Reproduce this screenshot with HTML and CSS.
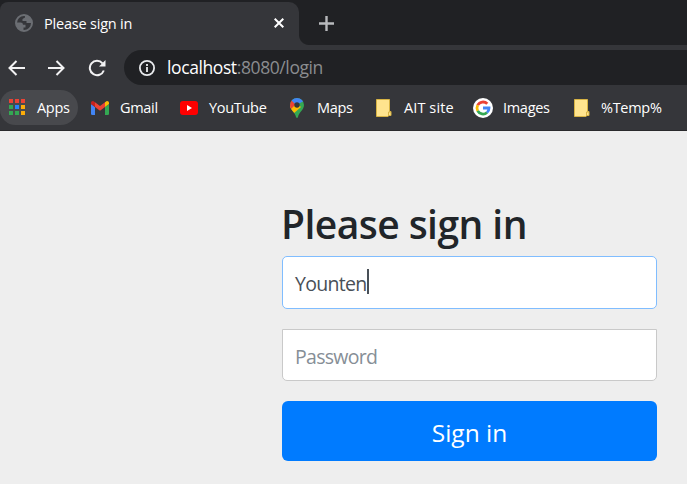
FILE: index.html
```html
<!DOCTYPE html>
<html lang="en">
<head>
<meta charset="utf-8">
<title>Please sign in</title>
<link rel="stylesheet" href="styles.css">
</head>
<body>
<header class="browser">
  <div class="tabs">
    <div class="tab">
      <svg class="globe" width="18" height="18" viewBox="0 0 18 18"><circle cx="9" cy="9" r="8" fill="none" stroke="#6b6e73" stroke-width="2"/><path d="M1 8.500h4.500q2.500 0 2.500 2.300h2.500v2.700H8.500V17L3 15 1 11zM10 1v2.500L7.500 5v2h4v2H17V7l-3-5z" fill="#6b6e73"/></svg>
      <span class="tab-title">Please sign in</span>
      <svg class="close" width="10" height="10" viewBox="0 0 10 10"><path d="M.7.7l8.600 8.600M9.300.7L.7 9.300" stroke="#fff" stroke-width="2"/></svg>
    </div>
    <div class="tab-curve"></div>
    <svg class="plus" width="15" height="15" viewBox="0 0 15 15"><path d="M7.500 0v15M0 7.500h15" stroke="#b8babd" stroke-width="2.400"/></svg>
  </div>
  <div class="toolbar">
    <svg class="nav" width="17" height="16" viewBox="0 0 17 16"><path d="M17 8H1.500M8.500 1L1.500 8l7 7"/></svg>
    <svg class="nav" width="17" height="16" viewBox="0 0 17 16"><path d="M0 8h15.500M8.500 1l7 7-7 7"/></svg>
    <svg class="nav reload" width="18" height="18" viewBox="0 0 18 18"><path d="M14.500 4.300A7.200 7.200 0 1 0 15.800 11.500"/><path class="solid" d="M17.500 1v6.500H11z"/></svg>
    <div class="address">
      <svg class="info" width="16" height="16" viewBox="0 0 16 16"><circle cx="8" cy="8" r="7.100"/><path d="M8 7v5M8 4v2"/></svg>
      <span class="url"><b>localhost</b>:8080/login</span>
    </div>
  </div>
  <nav class="bookmarks">
    <a class="mark apps"><svg width="17" height="17" viewBox="0 0 17 17"><path d="M0 0h4v4H0zM6 0h4v4H6zM12 0h4v4h-4z" fill="#ea4335"/><path d="M0 6h4v4H0zM0 12h4v4H0zM6 12h4v4H6z" fill="#34a853"/><path d="M6 6h4v4H6z" fill="#2784fc"/><path d="M12 6h4v4h-4zM12 12h4v4h-4z" fill="#fbac09"/></svg><span>Apps</span></a>
    <a class="mark"><svg width="18" height="14" viewBox="0 0 18 14"><path d="M0 3l4 3v8H1.300Q0 14 0 12.700z" fill="#4285f4"/><path d="M18 3l-4 3v8h2.700q1.300 0 1.300-1.300z" fill="#34a853"/><path d="M4 1.300l5 3.800 5-3.800V6L9 9.800 4 6z" fill="#ea4335"/><path d="M0 3V2C0 .2 2-.5 3.300.700L4 1.300V6z" fill="#c5221f"/><path d="M18 3V2c0-1.800-2-2.500-3.300-1.300L14 1.300V6z" fill="#fbbc04"/></svg><span>Gmail</span></a>
    <a class="mark"><svg width="18" height="14" viewBox="0 0 18 14"><rect width="18" height="14" rx="3" fill="#f00"/><path d="M7 4l5 3-5 3z" fill="#fff"/></svg><span>YouTube</span></a>
    <a class="mark maps"><svg width="14" height="20" viewBox="0 0 14 20"><defs><clipPath id="pin"><path d="M7 0a7 7 0 0 1 7 7c0 5-5 7-6 12q-1 2-2 0C5 14 0 12 0 7a7 7 0 0 1 7-7z"/></clipPath></defs><g clip-path="url(#pin)"><path d="M0 0h14v20H0z" fill="#34a853"/><path d="M0 8L5 4l6 5-8 7H0z" fill="#fbbc04"/><path d="M0 1L6 6 0 12z" fill="#ea4335"/><path d="M1 2L6 7 14 3 10-1H3z" fill="#4285f4"/></g><circle cx="7" cy="7" r="2.700" fill="#35363a"/></svg><span>Maps</span></a>
    <a class="mark ait"><svg width="16" height="18" viewBox="0 0 16 18"><path d="M.5.500h13v12h1.500v4H13l-1 1H.5z" fill="#ffe48e" stroke="#d7b344"/><path d="M12.500 17v-4h2.500" fill="none" stroke="#d7b344"/></svg><span>AIT site</span></a>
    <a class="mark google"><svg width="20" height="20" viewBox="0 0 20 20"><circle cx="10" cy="10" r="10" fill="#fff"/><g fill="none" stroke-width="2.800"><path d="M4.700 7.200A6 6 0 0 1 14.300 5.800" stroke="#ea4335"/><path d="M4.700 12.800a6 6 0 0 1 0-5.600" stroke="#fbbc04"/><path d="M14 14.500a6 6 0 0 1-9.300-1.700" stroke="#34a853"/><path d="M10 10h6q0 3-2 4.500" stroke="#4285f4"/></g></svg><span>Images</span></a>
    <a class="mark"><svg width="16" height="18" viewBox="0 0 16 18"><path d="M.5.500h13v12h1.500v4H13l-1 1H.5z" fill="#ffe48e" stroke="#d7b344"/><path d="M12.500 17v-4h2.500" fill="none" stroke="#d7b344"/></svg><span>%Temp%</span></a>
  </nav>
</header>
<main class="page">
  <form class="login">
    <h1><span>Please sign in</span></h1>
    <div class="field user"><span>Younten</span><i class="caret"></i></div>
    <div class="field password"><span>Password</span></div>
    <button type="button"><span>Sign in</span></button>
  </form>
</main>
</body>
</html>
```
FILE: styles.css
```css
* { box-sizing: border-box; }
body { margin: 0; height: 484px; overflow: hidden; background: #eee; font-family: "Open Sans", "Noto Sans", sans-serif; }
svg { display: block; flex: none; }
span { white-space: nowrap; }
.browser { height: 131px; background: #35363a; border-bottom: 1px solid #29292c; color: #fff; }
.tabs { height: 45px; background: #202124; display: flex; align-items: flex-end; }
.tab { width: 299px; height: 43px; background: #35363a; border-radius: 8px 10px 0 0; display: flex; align-items: center; padding: 0 15px 1px; }
.tab-title { margin-left: 11px; font-size: 14.500px; letter-spacing: -.2px; }
.close { margin-left: auto; }
.tab-curve { width: 10px; height: 10px; background: radial-gradient(circle at 100% 0, #202124 9.5px, #35363a 10.500px); }
.plus { margin: 0 0 14px 10px; }
.toolbar { height: 45px; display: flex; align-items: center; padding-left: 8px; gap: 23px; }
.nav { fill: none; stroke: #f2f2f3; stroke-width: 2; }
.nav .solid { fill: #f2f2f3; stroke: none; }
.reload { margin-right: -5px; }
.address { flex: 1; height: 35px; background: #202124; border-radius: 18px 0 0 18px; display: flex; align-items: center; padding-left: 15px; }
.info { fill: none; stroke: #e8eaed; stroke-width: 1.800; }
.url { margin: -2px 0 0 12px; font-size: 17.500px; letter-spacing: -.4px; color: #8b8d90; }
.url b { font-weight: 400; color: #fff; }
.bookmarks { height: 35px; display: grid; grid-template-columns: 91px 89px 110px 86px 97px 101px 1fr; }
.mark { display: flex; align-items: center; font-size: 14.500px; letter-spacing: -.3px; }
.mark span { margin-left: 11px; }
.apps { width: 78px; background: #48494d; border-radius: 16px 18px 18px 16px; padding-left: 9px; }
.maps span { margin-left: 13px; }
.google span { margin-left: 10px; }
.ait span { margin-left: 12px; letter-spacing: .1px; }
.login { width: 375px; margin-left: 282px; padding-top: 65px; }
h1 { margin: 0 0 0 -1px; height: 60px; line-height: 56px; font-size: 39px; font-weight: 600; letter-spacing: -.55px; color: #212529; }
.field { display: flex; align-items: center; padding: 2px 12px 0; background: #fff; font-size: 19.500px; letter-spacing: -.7px; }
.user { height: 53px; border: 1px solid #80bdff; border-radius: 5px; color: #495057; }
.caret { width: 2px; height: 25px; background: #495057; margin-bottom: 4px; }
.password { height: 52px; margin-top: 20px; border: 1px solid #c9c9c9; border-radius: 0 0 5px 5px; color: #868e96; }
button { display: block; width: 375px; height: 60px; margin-top: 20px; padding: 2px 0 0; border: 0; border-radius: 6px; background: #007bff; color: #fff; font: 24.500px "Open Sans", sans-serif; }
```
